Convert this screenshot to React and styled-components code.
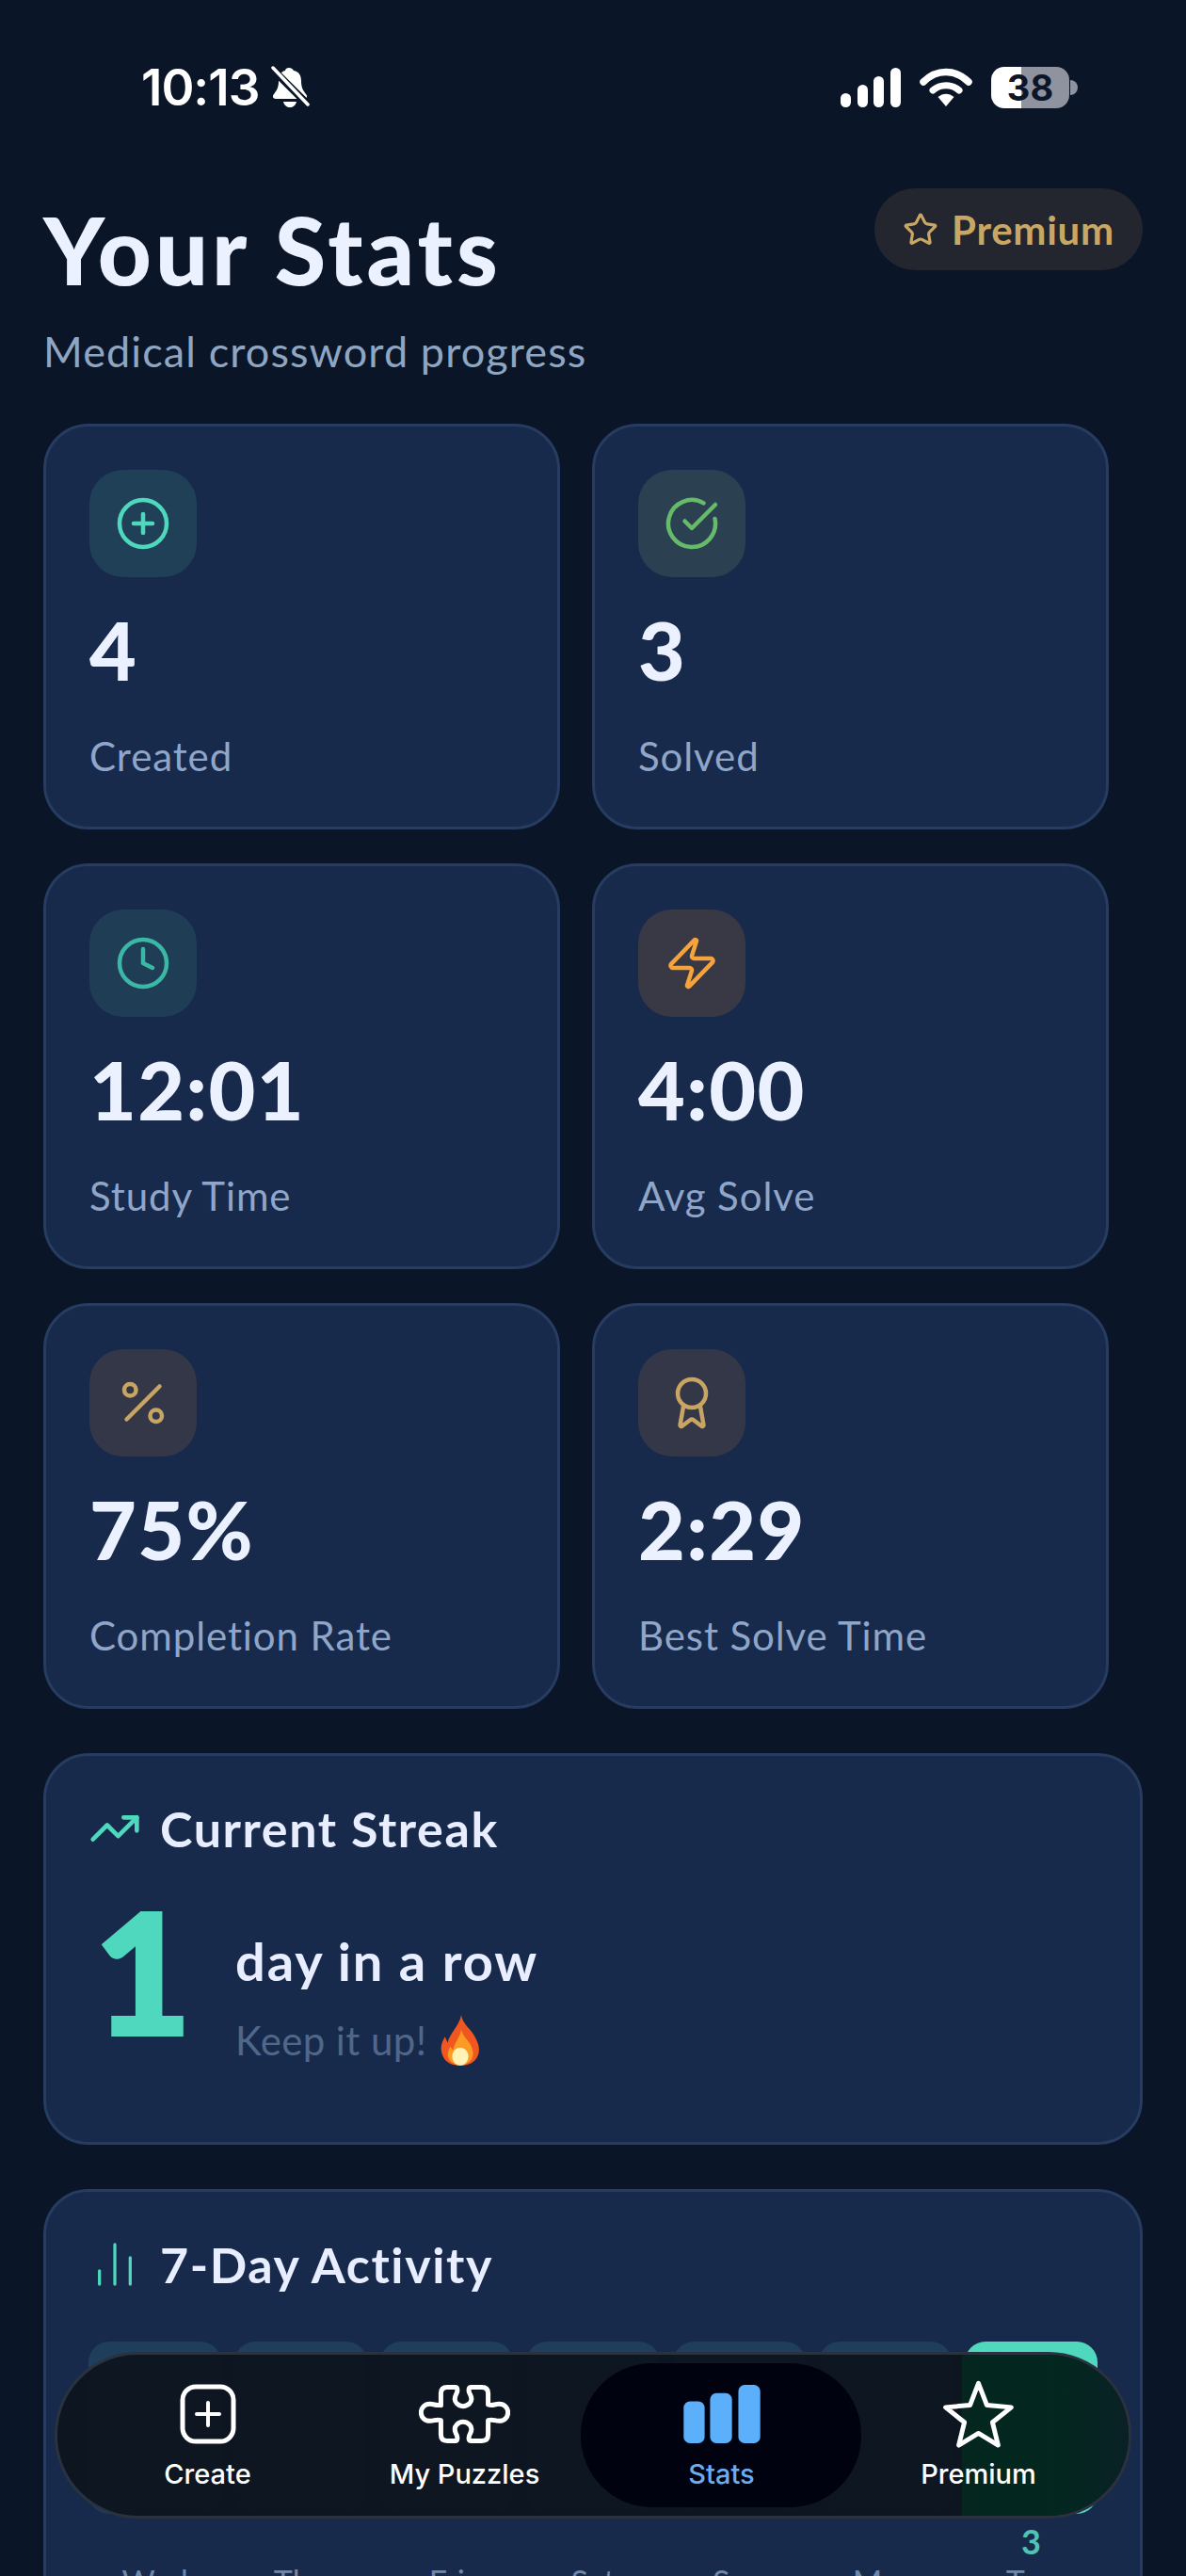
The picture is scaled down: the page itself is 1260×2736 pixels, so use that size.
import React from "react";
import styled, { createGlobalStyle } from "styled-components";
import { CirclePlus, CircleCheckBig, Clock, Zap, Percent, Award, TrendingUp, ChartNoAxesColumn, Star } from "lucide-react";

const Global = createGlobalStyle`
  html, body { margin: 0; padding: 0; background: #0a1628; }
  * { box-sizing: border-box; }
`;

const Page = styled.div`
  position: relative;
  width: 1260px;
  height: 2736px;
  overflow: hidden;
  background: #0a1628;
  font-family: "Lato", "Noto Sans", sans-serif;
`;

const StatusBar = styled.div`
  height: 200px;
  display: flex;
  justify-content: space-between;
  align-items: flex-start;
  padding: 65px 115px 0 150px;
  color: #fff;
`;
const StatusGroup = styled.div`
  display: flex;
  align-items: center;
  gap: ${p => p.$gap || 12}px;
  height: 56px;
`;
const Time = styled.span`
  font-family: "Inter", sans-serif;
  font-size: 53px;
  font-weight: 600;
  letter-spacing: -1px;
`;
const Battery = styled.div`
  width: 83px;
  height: 44px;
  border-radius: 14px;
  background: linear-gradient(90deg, #fff 39%, #8f93a0 39%);
  display: flex;
  align-items: center;
  justify-content: center;
  font-family: "Inter", sans-serif;
  font-weight: 700;
  font-size: 38px;
  color: #0c1628;
`;
const BatteryNub = styled.i`
  width: 8px;
  height: 16px;
  margin-left: -19px;
  border-radius: 0 8px 8px 0;
  background: #8f93a0;
`;

const Header = styled.header`
  display: flex;
  justify-content: space-between;
  align-items: flex-start;
  padding: 0 46px;
  height: 250px;
`;
const Title = styled.h1`
  margin: 12px 0 0;
  font-size: 99px;
  line-height: 106px;
  font-weight: 900;
  letter-spacing: 4px;
  color: #ecf1ff;
`;
const Sub = styled.p`
  margin: 27px 0 0;
  font-size: 45px;
  line-height: 56px;
  letter-spacing: 1.1px;
  color: #8fa6c2;
`;
const PremiumPill = styled.div`
  display: flex;
  align-items: center;
  gap: 14px;
  height: 87px;
  width: 285px;
  justify-content: center;
  border-radius: 44px;
  background: #24262f;
  color: #c8a664;
  font-size: 42px;
  font-weight: 700;
  letter-spacing: 0.7px;
`;

const Grid = styled.div`
  display: grid;
  grid-template-columns: 549px 549px;
  gap: 36px 34px;
  padding: 0 46px;
`;
const Card = styled.div`
  height: 431px;
  background: #182a4b;
  border: 3px solid #263c60;
  border-radius: 48px;
  padding: 46px 46px 0;
`;
const IconBox = styled.div`
  width: 114px;
  height: 114px;
  border-radius: 36px;
  background: ${p => p.$bg};
  color: ${p => p.$fg};
  display: flex;
  align-items: center;
  justify-content: center;
`;
const Value = styled.div`
  margin-top: 27px;
  font-size: 86px;
  line-height: 100px;
  font-weight: 900;
  letter-spacing: 1.4px;
  color: #ecf1ff;
`;
const Label = styled.div`
  margin-top: 38px;
  font-size: 42px;
  line-height: 50px;
  letter-spacing: 0.9px;
  color: #8fa6c9;
`;

const Panel = styled.section`
  margin: ${p => p.$mt}px 46px 0;
  height: ${p => p.$h}px;
  background: #182a4b;
  border: 3px solid #263c60;
  border-radius: 48px;
  padding: 39px 45px 0;
`;
const PanelHead = styled.div`
  display: flex;
  align-items: center;
  gap: ${p => p.$gap}px;
  height: 76px;
  color: #4fd8bd;
  font-size: 52px;
  font-weight: 700;
  letter-spacing: 1.6px;
`;
const PanelTitle = styled.span`
  color: #e8eeff;
`;
const StreakRow = styled.div`
  display: flex;
  align-items: flex-start;
  margin-top: 17px;
`;
const BigNum = styled.div`
  width: 156px;
  font-size: 178px;
  line-height: 190px;
  font-weight: 900;
  color: #4fd8bd;
  -webkit-text-stroke: 4px #4fd8bd;
  padding-left: 6px;
`;
const StreakText = styled.div`
  padding-top: 53px;
`;
const StreakMain = styled.div`
  font-size: 56px;
  line-height: 66px;
  font-weight: 700;
  letter-spacing: 1.9px;
  color: #e8eeff;
`;
const StreakSub = styled.div`
  display: flex;
  align-items: center;
  gap: 14px;
  margin-top: 23px;
  font-size: 42px;
  line-height: 56px;
  letter-spacing: 0.4px;
  color: #4f6788;
`;

const Bars = styled.div`
  display: grid;
  grid-template-columns: repeat(7, 1fr);
  column-gap: 14px;
  margin-top: 44px;
`;
const Day = styled.div`
  display: flex;
  flex-direction: column;
  align-items: center;
`;
const Bar = styled.div`
  width: 100%;
  height: 183px;
  border-radius: 22px;
  background: ${p => (p.$on ? "#4fd8bd" : "#1e3e5c")};
`;
const Count = styled.div`
  height: 50px;
  padding-top: 8px;
  display: flex;
  align-items: center;
  font-size: 36px;
  font-weight: 700;
  color: #4fc4b4;
`;
const DayName = styled.div`
  font-size: 34px;
  line-height: 44px;
  color: #6f87a8;
`;

const Nav = styled.nav`
  position: absolute;
  left: 58px;
  top: 2498px;
  width: 1144px;
  height: 177px;
  border-radius: 88px;
  border: 3px solid #2a3240;
  background: rgba(13, 21, 31, 0.97);
  display: grid;
  grid-template-columns: repeat(4, 273px);
  padding-left: 23px;
  align-items: stretch;
  overflow: hidden;
`;
const NavTint = styled.div`
  position: absolute;
  left: 961px;
  right: 0;
  top: 0;
  bottom: 0;
  background: linear-gradient(90deg, #04261f 0%, #03281f 55%, #0a2126 100%);
`;
const NavItem = styled.div`
  position: relative;
  display: flex;
  flex-direction: column;
  align-items: center;
  font-family: "Inter", sans-serif;
  font-size: 29px;
  font-weight: 500;
  padding-top: 28px;
  color: ${p => (p.$on ? "#5cb0fb" : "#fff")};
`;
const NavPill = styled.div`
  position: absolute;
  left: -13px;
  top: 9px;
  width: 298px;
  height: 153px;
  border-radius: 76px;
  background: #01020f;
`;
const NavIcon = styled.div`
  position: relative;
  height: 70px;
  display: flex;
  align-items: center;
  justify-content: center;
`;
const NavLabel = styled.span`
  position: relative;
  margin-top: 11px;
  color: ${p => (p.$on ? "#6aaef0" : "#fff")};
`;

const Bell = () => (
  <svg width="42" height="46" viewBox="0 0 42 46">
    <path d="M20 2c2 0 4 1 5 3 6 1 8 6 8 11 0 7 2 10 5 14 2 2 1 5-2 5H6c-3 0-4-3-2-5 3-4 5-7 5-14 0-5 2-10 7-11 0-2 2-3 4-3z" fill="#fff" />
    <path d="M14 38h14c-1 4-4 6-7 6s-6-2-7-6z" fill="#fff" />
    <path d="M2 3l38 38" stroke="#0a1628" strokeWidth="8" />
    <path d="M3 2l37 39" stroke="#fff" strokeWidth="3.5" strokeLinecap="round" />
  </svg>
);
const Signal = () => (
  <svg width="64" height="42" viewBox="0 0 64 42" fill="#fff">
    <rect x="0" y="27" width="11" height="15" rx="5.5" />
    <rect x="18" y="18" width="11" height="24" rx="5.5" />
    <rect x="35" y="9" width="11" height="33" rx="5.5" />
    <rect x="53" y="0" width="11" height="42" rx="5.5" />
  </svg>
);
const Wifi = () => (
  <svg width="56" height="42" viewBox="0 0 56 42" fill="none" stroke="#fff" strokeLinecap="round">
    <path d="M4 15C18 1 38 1 52 15" strokeWidth="7.5" />
    <path d="M14 24c8-7 20-7 28 0" strokeWidth="7" />
    <path d="M19.500 31c5-4.500 12-4.500 17 0L28 41z" fill="#fff" stroke="none" />
  </svg>
);
const Fire = () => (
  <svg width="44" height="54" viewBox="0 0 46 56">
    <path d="M24 0c2 10 9 14 14 22 6 10 8 18 3 26-4 6-11 8-18 8S9 54 5 48c-5-8-4-16 1-24l3 7C11 20 22 12 24 0z" fill="#f0561f" />
    <path d="M24 16c2 8 8 12 11 18 3 7 3 13-1 17-3 3-7 5-11 5s-9-2-12-6c-3-5-2-10 1-15l3 4c1-8 8-14 9-23z" fill="#fb9a24" />
    <ellipse cx="23" cy="46" rx="9" ry="10" fill="#fff3b5" />
  </svg>
);
const CreateIcon = () => (
  <svg width="60" height="64" viewBox="0 0 60 64" fill="none" stroke="#fff" strokeWidth="5">
    <rect x="3" y="3" width="54" height="58" rx="14" />
    <path d="M30 20v24M18 32h24" strokeWidth="4" strokeLinecap="round" />
  </svg>
);
const PuzzleIcon = () => (
  <svg width="97" height="64" viewBox="45 45 290 190" fill="none" stroke="#fff" strokeWidth="15" strokeLinejoin="round">
    <path d="M115 112V75Q115 55 135 55H160C170 55 168 70 163 78C150 105 175 115 185 115C195 115 222 105 208 78C203 70 200 55 212 55H245Q265 55 265 75V110C280 115 285 108 300 108C317 108 328 120 328 135C328 150 317 162 300 162C285 162 280 155 265 160V205Q265 225 245 225H212C200 225 203 210 208 202C222 175 195 165 185 165C175 165 150 175 163 202C168 210 170 225 160 225H135Q115 225 115 205V160C100 155 95 162 80 162C63 162 52 150 52 135C52 120 63 108 80 108C95 108 100 115 115 110Z" />
  </svg>
);
const StatsIcon = () => (
  <svg width="84" height="62" viewBox="0 0 84 64" fill="currentColor">
    <rect x="0" y="18" width="23" height="46" rx="7" />
    <rect x="29" y="9" width="24" height="55" rx="7" />
    <rect x="60" y="0" width="24" height="64" rx="7" />
  </svg>
);
const StarIcon = () => (
  <svg width="77" height="73" viewBox="120 175 230 220" fill="none" stroke="#fff" strokeWidth="15" strokeLinejoin="round">
    <path d="M235 185L262 255L340 262L280 310L298 383L235 345L172 383L190 310L130 262L208 255Z" />
  </svg>
);

const stats = [
  { Icon: CirclePlus, bg: "#204058", fg: "#4fd8bd", value: "4", label: "Created" },
  { Icon: CircleCheckBig, bg: "#2b4050", fg: "#66bb6a", value: "3", label: "Solved" },
  { Icon: Clock, bg: "#1f3d55", fg: "#3bb8a5", value: "12:01", label: "Study Time" },
  { Icon: Zap, bg: "#383945", fg: "#f5a33a", value: "4:00", label: "Avg Solve" },
  { Icon: Percent, bg: "#343748", fg: "#c9a563", value: "75%", label: "Completion Rate" },
  { Icon: Award, bg: "#343748", fg: "#c9a563", value: "2:29", label: "Best Solve Time" },
];
const days = ["Wed", "Thu", "Fri", "Sat", "Sun", "Mon", "Tue"];

export default function App() {
  return (
    <Page>
      <Global />
      <StatusBar>
        <StatusGroup $gap={12}>
          <Time>10:13</Time>
          <Bell />
        </StatusGroup>
        <StatusGroup $gap={20}>
          <Signal />
          <Wifi />
          <Battery>38</Battery>
          <BatteryNub />
        </StatusGroup>
      </StatusBar>
      <Header>
        <div>
          <Title>Your Stats</Title>
          <Sub>Medical crossword progress</Sub>
        </div>
        <PremiumPill>
          <Star size={38} strokeWidth={2} />
          Premium
        </PremiumPill>
      </Header>
      <Grid>
        {stats.map(({ Icon, bg, fg, value, label }) => (
          <Card key={label}>
            <IconBox $bg={bg} $fg={fg}>
              <Icon size={60} strokeWidth={1.8} />
            </IconBox>
            <Value>{value}</Value>
            <Label>{label}</Label>
          </Card>
        ))}
      </Grid>
      <Panel $mt={47} $h={416}>
        <PanelHead $gap={20}>
          <TrendingUp size={56} strokeWidth={2} />
          <PanelTitle>Current Streak</PanelTitle>
        </PanelHead>
        <StreakRow>
          <BigNum>1</BigNum>
          <StreakText>
            <StreakMain>day in a row</StreakMain>
            <StreakSub>
              Keep it up! <Fire />
            </StreakSub>
          </StreakText>
        </StreakRow>
      </Panel>
      <Panel $mt={47} $h={600}>
        <PanelHead $gap={20}>
          <ChartNoAxesColumn size={56} strokeWidth={1.4} />
          <PanelTitle>7-Day Activity</PanelTitle>
        </PanelHead>
        <Bars>
          {days.map((d, i) => (
            <Day key={d}>
              <Bar $on={i === 6} />
              <Count>{i === 6 ? "3" : ""}</Count>
              <DayName>{d}</DayName>
            </Day>
          ))}
        </Bars>
      </Panel>
      <Nav>
        <NavTint />
        <NavItem>
          <NavIcon><CreateIcon /></NavIcon>
          <NavLabel>Create</NavLabel>
        </NavItem>
        <NavItem>
          <NavIcon><PuzzleIcon /></NavIcon>
          <NavLabel>My Puzzles</NavLabel>
        </NavItem>
        <NavItem $on>
          <NavPill />
          <NavIcon><StatsIcon /></NavIcon>
          <NavLabel $on>Stats</NavLabel>
        </NavItem>
        <NavItem>
          <NavIcon><StarIcon /></NavIcon>
          <NavLabel>Premium</NavLabel>
        </NavItem>
      </Nav>
    </Page>
  );
}
